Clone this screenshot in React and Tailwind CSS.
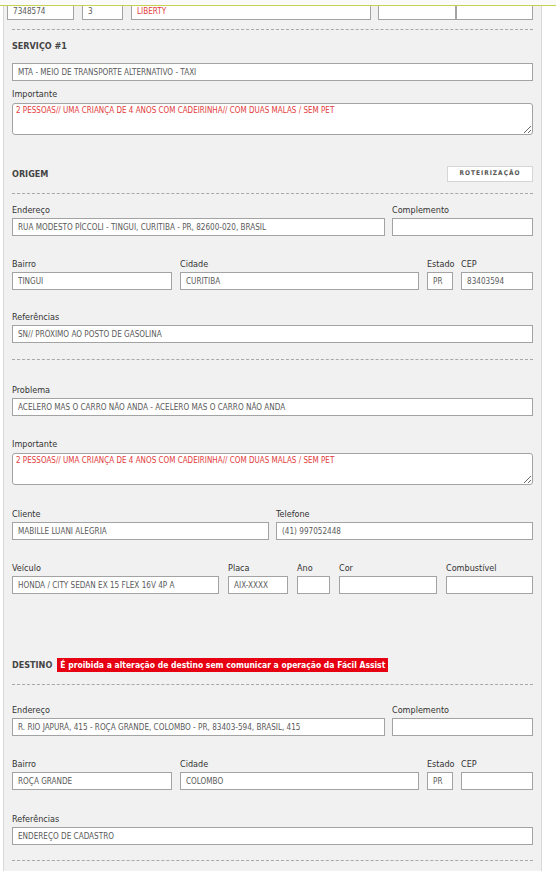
import React from "react";

const font = { fontFamily: '"DejaVu Sans Condensed", "DejaVu Sans", Verdana, sans-serif' };

function Box({ value = "", red = false, className = "" }) {
  return (
    <input
      readOnly
      value={value}
      className={`h-[18px] border border-[#a3a3a3] bg-white px-[5px] text-[8.1px] outline-none ${
        red ? "text-[#e23b3b]" : "text-[#5a5a5a]"
      } ${className}`}
    />
  );
}

function Field({ label, value, red, className = "", boxClass = "w-full" }) {
  return (
    <div className={`flex flex-col ${className}`}>
      <label className="mb-[2px] h-[12px] text-[9px] leading-[12px] text-[#333]">{label}</label>
      <Box value={value} red={red} className={boxClass} />
    </div>
  );
}

function Note({ value }) {
  return (
    <textarea
      readOnly
      value={value}
      className="h-[32px] w-full rounded-[3px] border border-[#a3a3a3] bg-white px-[3px] py-[1px] text-[8px] leading-[12px] text-[#e23b3b] outline-none"
    />
  );
}

function Dashed({ className = "" }) {
  return <div className={`border-t border-dashed border-[#a8a8a8] ${className}`} />;
}

function Heading({ children }) {
  return <h3 className="text-[9px] font-bold leading-[12px] text-[#444]">{children}</h3>;
}

export default function App() {
  return (
    <div className="relative h-[871px] w-[556px] overflow-hidden bg-white" style={font}>
      <div className="absolute left-0 right-0 top-0 z-10 h-[6px] border-b border-[#c6d250] bg-[#fafafa]" />

      <div className="ml-[3px] min-h-full w-[539px] border-l border-r border-[#d8d8d8] bg-[#f1f1f1] px-[8px]">
        <div className="-ml-[5px] flex pt-[2px]">
          <Box value="7348574" className="w-[67px]" />
          <Box value="3" className="ml-[8px] w-[41px]" />
          <Box value="LIBERTY" red className="ml-[8px] w-[241px]" />
          <Box className="ml-[7px] w-[78px]" />
          <Box className="w-[77px]" />
        </div>

        <Dashed className="mt-[9px]" />

        <div className="mt-[10px]">
          <Heading>SERVIÇO #1</Heading>
        </div>
        <Box value="MTA - MEIO DE TRANSPORTE ALTERNATIVO - TAXI" className="mt-[11px] w-full" />

        <label className="mt-[6px] block h-[12px] text-[9px] leading-[12px] text-[#333]">Importante</label>
        <div className="mt-[3px] flex">
          <Note value="2 PESSOAS// UMA CRIANÇA DE 4 ANOS COM CADEIRINHA// COM DUAS MALAS / SEM PET" />
        </div>

        <div className="mt-[31px] flex h-[16px] items-center justify-between">
          <Heading>ORIGEM</Heading>
          <button className="h-[16px] w-[86px] border border-[#d6d6d6] bg-white text-[6.5px] font-bold tracking-[1px] text-[#555]">
            ROTEIRIZAÇÃO
          </button>
        </div>

        <Dashed className="mt-[11px]" />

        <div className="mt-[10px] flex gap-[7px]">
          <Field label="Endereço" value="RUA MODESTO PÍCCOLI - TINGUI, CURITIBA - PR, 82600-020, BRASIL" className="w-[373px]" />
          <Field label="Complemento" className="flex-1" />
        </div>

        <div className="mt-[22px] flex gap-[8px]">
          <Field label="Bairro" value="TINGUI" className="w-[160px]" />
          <Field label="Cidade" value="CURITIBA" className="w-[239px]" />
          <Field label="Estado" value="PR" className="w-[26px]" />
          <Field label="CEP" value="83403594" className="flex-1" />
        </div>

        <Field label="Referências" value="SN// PRÓXIMO AO POSTO DE GASOLINA" className="mt-[21px]" />

        <Dashed className="mt-[16px]" />

        <Field label="Problema" value="ACELERO MAS O CARRO NÃO ANDA - ACELERO MAS O CARRO NÃO ANDA" className="mt-[24px]" />

        <label className="mt-[22px] block h-[12px] text-[9px] leading-[12px] text-[#333]">Importante</label>
        <div className="mt-[3px] flex">
          <Note value="2 PESSOAS// UMA CRIANÇA DE 4 ANOS COM CADEIRINHA// COM DUAS MALAS / SEM PET" />
        </div>

        <div className="mt-[23px] flex gap-[7px]">
          <Field label="Cliente" value="MABILLE LUANI ALEGRIA" className="w-[257px]" />
          <Field label="Telefone" value="(41) 997052448" className="flex-1" />
        </div>

        <div className="mt-[22px] flex gap-[9px]">
          <Field label="Veículo" value="HONDA / CITY SEDAN EX 15 FLEX 16V 4P A" className="w-[207px]" />
          <Field label="Placa" value="AIX-XXXX" className="w-[60px]" />
          <Field label="Ano" className="w-[33px]" />
          <Field label="Cor" className="w-[98px]" />
          <Field label="Combustível" className="flex-1" />
        </div>

        <div className="mt-[64px] flex h-[14px] items-center gap-[5px]">
          <Heading>DESTINO</Heading>
          <span className="bg-[#e60012] px-[3px] text-[8.5px] font-bold leading-[14px] text-white">
            É proibida a alteração de destino sem comunicar a operação da Fácil Assist
          </span>
        </div>

        <Dashed className="mt-[12px]" />

        <div className="mt-[19px] flex gap-[7px]">
          <Field label="Endereço" value="R. RIO JAPURÁ, 415 - ROÇA GRANDE, COLOMBO - PR, 83403-594, BRASIL, 415" className="w-[373px]" />
          <Field label="Complemento" className="flex-1" />
        </div>

        <div className="mt-[22px] flex gap-[8px]">
          <Field label="Bairro" value="ROÇA GRANDE" className="w-[160px]" />
          <Field label="Cidade" value="COLOMBO" className="w-[239px]" />
          <Field label="Estado" value="PR" className="w-[26px]" />
          <Field label="CEP" className="flex-1" />
        </div>

        <Field label="Referências" value="ENDEREÇO DE CADASTRO" className="mt-[23px]" />

        <Dashed className="mt-[15px]" />
      </div>
    </div>
  );
}
